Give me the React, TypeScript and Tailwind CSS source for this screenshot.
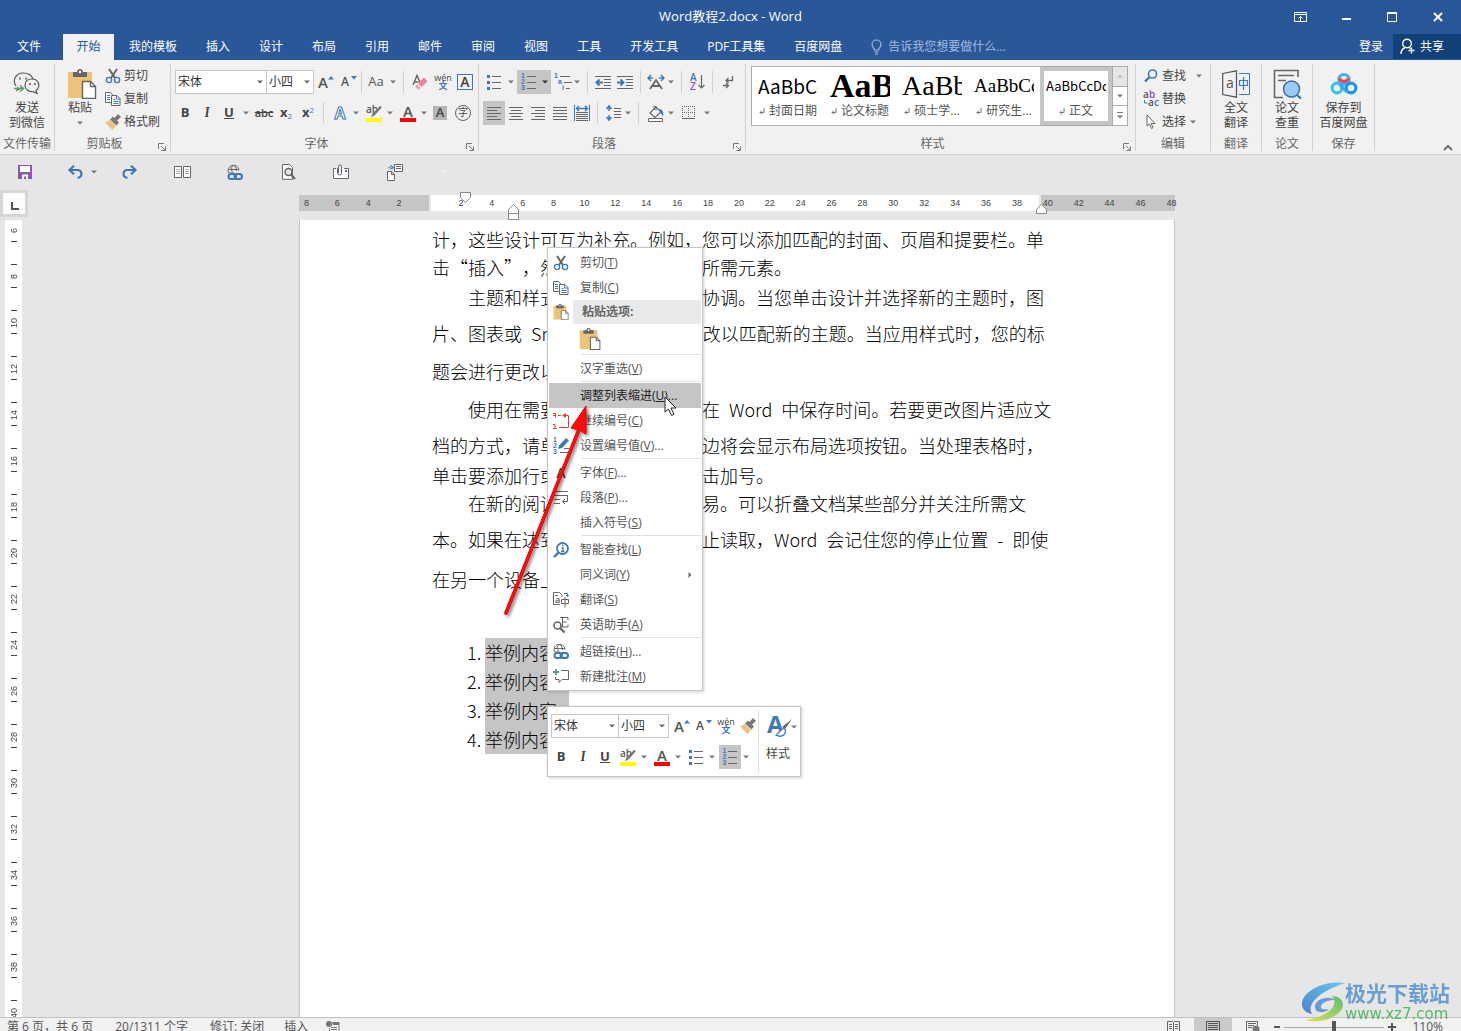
import { ReactNode } from 'react';

const BLUE = '#3f78b5';
const GREY = '#666666';
const TAN = '#edc27a';

type Kids = { children?: ReactNode };

/* ---------- small building blocks ---------- */

const Caret = ({ className = 'text-[#777]' }: { className?: string }) => (
  <svg width="6" height="4" viewBox="0 0 6 4" className={`shrink-0 ${className}`} aria-hidden="true">
    <path d="M0 .5h6L3 3.5z" fill="currentColor" />
  </svg>
);

const Tool = ({ label, className = 'w-[22px]', children }: Kids & { label: string; className?: string }) => (
  <button type="button" aria-label={label} className={`flex h-6 shrink-0 items-center justify-center ${className}`}>
    {children}
  </button>
);

const Drop = ({ className = 'w-3' }: { className?: string }) => (
  <Tool label="更多" className={className}>
    <Caret />
  </Tool>
);

const Sep = ({ className = 'mx-1' }: { className?: string }) => (
  <span className={`h-[22px] w-px shrink-0 bg-[#d0d0d0] ${className}`} />
);

const Combo = ({ label, value, className }: { label: string; value: string; className: string }) => (
  <label className={`relative flex h-6 shrink-0 items-center ${className}`}>
    <select
      aria-label={label}
      defaultValue={value}
      className="h-full w-full appearance-none border border-[#c6c6c6] bg-white pl-0.5 text-xs text-[#333] outline-none"
    >
      <option>{value}</option>
    </select>
    <Caret className="pointer-events-none absolute right-1 text-[#666]" />
  </label>
);

/* ---------- icons ---------- */

const Svg = ({ w, h, children }: Kids & { w: number; h: number }) => (
  <svg width={w} height={h} viewBox={`0 0 ${w} ${h}`} fill="none" className="shrink-0 overflow-visible" aria-hidden="true">
    {children}
  </svg>
);

const ScissorsIcon = () => (
  <Svg w={16} h={16}>
    <path d="M4 1l6 9M12 1L6 10" stroke="#666" strokeWidth="2" />
    <circle cx="4" cy="12" r="2.6" stroke={BLUE} strokeWidth="1.4" />
    <circle cx="12" cy="12" r="2.6" stroke={BLUE} strokeWidth="1.4" />
  </Svg>
);

const CopyIcon = () => (
  <Svg w={16} h={16}>
    <path d="M.5 1.500h5l2 2v8h-7z" fill="#fff" stroke={GREY} />
    <path d="M2 4.500h3M2 6.500h3M2 8.500h3" stroke={BLUE} />
    <path d="M6.500 4.500h5.500l3 3v7h-8.500z" fill="#fff" stroke={GREY} />
    <path d="M11.500 4.500v3.500h3.500M8.500 8.500h2M8.500 10.500h5M8.500 12.500h5" stroke={BLUE} />
  </Svg>
);

const BrushIcon = () => (
  <Svg w={16} h={16}>
    <path d="M0 8.500l5-2.500 6 6-3.500 4z" fill={TAN} />
    <path d="M5 5.500l6.500 6 2.500-3-2-2 4-3.500L13 0 9.500 4 8 2.500z" fill="#777" />
  </Svg>
);

const PasteIcon = ({ size }: { size: number }) => (
  <svg width={size} height={size} viewBox="0 0 30 30" fill="none" className="shrink-0" aria-hidden="true">
    <path d="M1 3h24v26H1z" fill={TAN} />
    <path d="M6 3h4c0-4 6-4 6 0h4v5H6z" fill={GREY} />
    <circle cx="13" cy="3" r="1.200" fill="#fff" />
    <path d="M15.500 12.500h8l5 5v12h-13z" fill="#fff" stroke={GREY} strokeWidth="1.400" />
    <path d="M23.500 12.500v5h5" stroke={GREY} strokeWidth="1.400" />
  </svg>
);

const WeChatIcon = () => (
  <Svg w={28} h={26}>
    <path d="M3 15C-1 9 3 2 10 2c6 0 9 3 10 6M8 17l-4 2 1-3" stroke="#555" strokeWidth="1.200" />
    <path d="M19 8c-5 0-7 3-7 6.500 0 4 4 6.500 8 6.200l4 1.800-1-3c5-4 3-11.500-4-11.500z" stroke="#555" strokeWidth="1.200" />
    <path d="M7 6.500v2M13 6.500v2M17 12v2M22 12v2" stroke="#555" strokeWidth="1.500" />
    <path d="M1 17.500h9M7 14.500l3.500 3L7 20.500" stroke="#4fa264" strokeWidth="1.500" />
  </Svg>
);

const GrowIcon = ({ shrink = false }: { shrink?: boolean }) => (
  <span className="relative flex h-4 w-4 items-end justify-start leading-none text-[#555]">
    <span className={shrink ? 'text-xs font-semibold' : 'text-[15px] font-semibold'}>A</span>
    <svg width="6" height="4" viewBox="0 0 6 4" className="absolute top-0.5 right-0" aria-hidden="true">
      <path d={shrink ? 'M0 0h6L3 3.500z' : 'M0 3.500h6L3 0z'} fill={BLUE} />
    </svg>
  </span>
);

const EraserIcon = () => (
  <Svg w={16} h={16}>
    <path d="M1 11L5 1.500 8 8M2.500 8h4" stroke={GREY} strokeWidth="1.500" />
    <path d="M12 3.500l3.500 4-6 5.500-3.500-4z" fill="#e8849a" />
    <path d="M5 10l3.500 4-2 2L3 12.500z" fill="#ef9fb0" />
  </Svg>
);

const PinyinIcon = () => (
  <span className="flex flex-col items-center text-[9px] leading-2 text-[#444]">
    <span>wén</span>
    <span className="font-bold text-[#3f78b5]">文</span>
  </span>
);

const ColorBar = ({ color, children }: Kids & { color: string }) => (
  <span className="flex w-4 flex-col items-center">
    {children}
    <span className="h-1 w-4" style={{ backgroundColor: color }} />
  </span>
);

const HighlightIcon = () => (
  <ColorBar color="#ffff00">
    <Svg w={16} h={13}>
      <text x="0" y="8" fontSize="10" fontWeight="600" fill="#555">ab</text>
      <path d="M16 2L9 10l-4 2.500 1.500-4L14 1z" fill="#777" />
    </Svg>
  </ColorBar>
);

const FontColorIcon = () => (
  <ColorBar color="#ff0000">
    <span className="text-[15px] leading-[13px] font-semibold text-[#555]">A</span>
  </ColorBar>
);

const BulletsIcon = () => (
  <Svg w={14} h={16}>
    <path d="M0 1h3v3H0zM0 7h3v3H0zM0 13h3v3H0z" fill={BLUE} />
    <path d="M5 2.500h9M5 8.500h9M5 14.500h9" stroke={GREY} />
  </Svg>
);

const Digits = () => (
  <span className="flex flex-col text-[7px] leading-[6px] font-bold text-[#3f78b5] [font-family:'Liberation_Sans',sans-serif]">
    <span>1</span>
    <span>2</span>
    <span>3</span>
  </span>
);

const NumberingIcon = () => (
  <span className="flex items-center gap-0.5">
    <Digits />
    <Svg w={9} h={18}>
      <path d="M0 3.500h9M0 9.500h9M0 15.500h9" stroke={GREY} />
    </Svg>
  </span>
);

const MultiLevelIcon = () => (
  <span className="flex h-[18px] w-[18px] flex-col text-[7px] leading-[6px] font-bold text-[#3f78b5] [font-family:'Liberation_Sans',sans-serif]">
    <span className="flex items-center gap-0.5">1<i className="h-px w-2.5 bg-[#666]" /></span>
    <span className="flex items-center gap-0.5 pl-1">a<i className="h-px w-2 bg-[#666]" /></span>
    <span className="flex items-center gap-0.5 pl-2">i<i className="h-px w-1 bg-[#666]" /></span>
  </span>
);

const IndentIcon = ({ out = false }: { out?: boolean }) => (
  <Svg w={16} h={14}>
    <path d="M0 1.500h16M9 4.500h7M9 7.500h7M9 10.500h7M0 13.500h16" stroke={GREY} />
    <path
      d={out ? 'M8 7.500H2M4.500 4.500l-3 3 3 3' : 'M0 7.500h6M3.500 4.500l3 3-3 3'}
      stroke={BLUE}
      strokeWidth="2"
    />
  </Svg>
);

const AlignIcon = ({ d }: { d: string }) => (
  <Svg w={14} h={13}>
    <path d={d} stroke={GREY} />
  </Svg>
);

const DistributeIcon = () => (
  <Svg w={16} h={16}>
    <path d="M.5 0v16M15.500 0v16" stroke={BLUE} />
    <path d="M2 3.500h12M5 1L2.500 3.500 5 6M11 1l2.500 2.500L11 6" stroke={BLUE} strokeWidth="1.500" />
    <path d="M2 7.500h12M2 9.500h12M2 11.500h12M2 13.500h12M2 15.500h12" stroke={GREY} />
  </Svg>
);

const ScaleIcon = () => (
  <Svg w={18} h={16}>
    <path d="M1 4h5M4 1L1 4l3 3M17 4h-5M14 1l3 3-3 3" stroke={BLUE} strokeWidth="1.400" />
    <path d="M3 15L9 6l6 9M5.500 12h7" stroke={GREY} strokeWidth="1.800" />
  </Svg>
);

const SortIcon = () => (
  <Svg w={15} h={18}>
    <text x="0" y="8" fontSize="10" fontWeight="600" fill={BLUE}>A</text>
    <text x="0" y="17" fontSize="10" fontWeight="600" fill="#8b4fb0">Z</text>
    <path d="M11.500 2v13M8.500 12l3 3 3-3" stroke={GREY} strokeWidth="1.200" />
  </Svg>
);

const MarksIcon = () => (
  <Svg w={12} h={14}>
    <path d="M10.500 1v4.500H4M6.500 3L4 5.500 6.500 8M1 10.500h5M4 8l2.500 2.500L4 13" stroke={GREY} strokeWidth="1.300" />
  </Svg>
);

const LineSpaceIcon = () => (
  <Svg w={15} h={16}>
    <path d="M3 1v5M.5 4L3 1l2.500 3M3 10v5M.5 12L3 15l2.500-3" stroke={BLUE} strokeWidth="1.500" />
    <path d="M8 3.500h7M8 6.500h7M8 9.500h7M8 12.500h7" stroke={GREY} />
  </Svg>
);

const BucketIcon = () => (
  <Svg w={17} h={17}>
    <path d="M3 8l6-6 5 5-6 5.500z" fill="#fff" stroke={GREY} strokeWidth="1.200" />
    <path d="M7 5V1.500h2V6" stroke={GREY} />
    <path d="M12 4c4 0 5 4 4 8-1-3-2-4-3-4z" fill={BLUE} />
    <path d="M1.500 13.500h14v3h-14z" fill="#fff" stroke={GREY} />
  </Svg>
);

const BorderIcon = () => (
  <Svg w={14} h={14}>
    <path d="M.5 0v13M6.500 0v13M12.500 0v13M0 .5h13M0 6.500h13" stroke={GREY} strokeDasharray="1 1" />
    <path d="M0 12.500h13" stroke={GREY} />
  </Svg>
);

const FindIcon = () => (
  <Svg w={14} h={14}>
    <circle cx="8.500" cy="5" r="4" stroke={BLUE} strokeWidth="1.600" />
    <path d="M5.500 8L1 12.500" stroke={BLUE} strokeWidth="2.400" />
  </Svg>
);

const ReplaceIcon = () => (
  <Svg w={17} h={16}>
    <text x="0" y="7" fontSize="10" fontWeight="600" fill="#555">a</text>
    <text x="6" y="7" fontSize="10" fontWeight="600" fill="#8b4fb0">b</text>
    <text x="5" y="15" fontSize="10" fontWeight="600" fill="#555">a</text>
    <text x="11" y="15" fontSize="10" fontWeight="600" fill={BLUE}>c</text>
    <path d="M1.500 9v3h3" stroke={BLUE} />
  </Svg>
);

const PointerIcon = () => (
  <Svg w={10} h={15}>
    <path d="M1 1v11l2.500-2 2 4.500 1.500-.8L5.200 9.500H9z" fill="#fff" stroke={GREY} />
  </Svg>
);

const TranslateBigIcon = () => (
  <Svg w={28} h={28}>
    <path d="M.7 3.500L14.500.8v26.400L.7 24.500z" stroke="#555" strokeWidth="1.200" />
    <text x="4" y="18" fontSize="14" fill="#555">a</text>
    <path d="M17 3.500h10.500M17 24.500h10.500v-21" stroke={BLUE} />
    <path d="M17.500 10.500h8v5h-8zM21.500 7v13" stroke={BLUE} strokeWidth="1.200" />
  </Svg>
);

const PaperCheckIcon = () => (
  <Svg w={30} h={30}>
    <path d="M11 28.500H2.500v-27H26V8M6 6.500h16M6 11.500h8" stroke="#666" strokeWidth="1.600" />
    <circle cx="19.500" cy="20" r="8" fill="#9acbf5" stroke="#3a6ea5" strokeWidth="1.500" />
    <path d="M25 26l4 3.500" stroke="#3a6ea5" strokeWidth="2.200" />
  </Svg>
);

const CloudIcon = () => (
  <Svg w={28} h={24}>
    <circle cx="14" cy="7.500" r="5" stroke="#3fb4ee" strokeWidth="3.200" />
    <circle cx="7" cy="16" r="4.800" stroke="#38c3ee" strokeWidth="3.200" />
    <circle cx="21" cy="16" r="4.800" stroke="#1b93f2" strokeWidth="3.200" />
    <path d="M10 12.500c2 2.500 4 6 8 7.500" stroke="#30a9f0" strokeWidth="3.200" />
    <path d="M9.200 6a5 5 0 009.600 0" stroke="#ef476b" strokeWidth="3.200" />
  </Svg>
);

const LauncherIcon = () => (
  <Svg w={8} h={8}>
    <path d="M.5 6V.5H6M3 3l4 4M7.500 3.500v4h-4" stroke="#777" />
  </Svg>
);

const LinkIcon = () => (
  <Svg w={16} h={17}>
    <path d="M1.500 9A5.500 5.500 0 1112 6.500M1 5.500h11M6.500 1c-3 3-3 5 0 8M6.500 1c3 3 3 4 3 6M2 9h3" stroke={GREY} />
    <rect x="1.500" y="10" width="7.500" height="5" rx="2.500" stroke={BLUE} strokeWidth="2" />
    <rect x="7.500" y="10" width="7.500" height="5" rx="2.500" stroke={BLUE} strokeWidth="2" />
  </Svg>
);

/* ---------- title bar and tabs ---------- */

const tabs = ['我的模板', '插入', '设计', '布局', '引用', '邮件', '审阅', '视图', '工具', '开发工具', 'PDF工具集', '百度网盘'];

const TitleBar = () => (
  <header className="bg-[#2a579a] text-xs text-white">
    <div className="flex h-[34px] items-center">
      <div className="flex-1" />
      <h1 className="text-[13px]">Word教程2.docx - Word</h1>
      <div className="flex flex-1 justify-end">
        <Tool label="功能区显示选项" className="w-[46px]">
          <Svg w={13} h={10}>
            <path d="M.5.5h12v9H.5zM0 2.500h13M6.500 9V4.500M4.500 6.500l2-2 2 2" stroke="#fff" />
          </Svg>
        </Tool>
        <Tool label="最小化" className="w-[46px]">
          <Svg w={10} h={10}><path d="M1 7h9" stroke="#fff" strokeWidth="2" /></Svg>
        </Tool>
        <Tool label="最大化" className="w-[46px]">
          <Svg w={10} h={10}><path d="M.5.5h9v9h-9zM0 1.500h10" stroke="#fff" /></Svg>
        </Tool>
        <Tool label="关闭" className="w-[46px]">
          <Svg w={10} h={10}><path d="M1 1l8 8M9 1L1 9" stroke="#fff" strokeWidth="2" /></Svg>
        </Tool>
      </div>
    </div>
    <nav className="flex h-[26px] items-stretch gap-px">
      <button type="button" className="w-[62px] pr-1">文件</button>
      <button type="button" className="w-[51px] bg-[#f1f1f1] text-[#2a579a]">开始</button>
      {tabs.map((t) => (
        <button key={t} type="button" className="px-3.5 whitespace-nowrap">{t}</button>
      ))}
      <label className="flex items-center gap-1.5 pl-3.5 text-[#a3bbdc]">
        <Svg w={11} h={15}>
          <path d="M3.500 10c0-2-2.500-2.500-2.500-5.500a4.500 4.500 0 019 0c0 3-2.500 3.500-2.500 5.500zM3.500 12h4M4 14h3" stroke="#a3bbdc" strokeWidth="1.200" />
        </Svg>
        <input
          aria-label="告诉我您想要做什么"
          placeholder="告诉我您想要做什么..."
          className="w-36 bg-transparent outline-none placeholder:text-[#a3bbdc]"
        />
      </label>
      <button type="button" className="ml-auto px-[9px]">登录</button>
      <button type="button" className="mb-px flex w-[68px] items-center gap-1 bg-[#124078] pl-[7px]">
        <Svg w={16} h={17}>
          <circle cx="7" cy="5.500" r="4.300" stroke="#fff" strokeWidth="1.400" />
          <path d="M1 16c0-3 2-5.500 4-6.500M9 9.500l1.500 1M11.500 9.500v6M8.500 12.500h6" stroke="#fff" strokeWidth="1.400" />
        </Svg>
        共享
      </button>
    </nav>
  </header>
);

/* ---------- ribbon ---------- */

type GroupProps = Kids & { name: string; className: string; inner?: string; launcher?: boolean };

const Group = ({ name, className, inner = '', launcher = false, children }: GroupProps) => (
  <section className={`flex shrink-0 flex-col border-r border-[#d0d0d0] ${className}`}>
    <div className={`h-[73px] ${inner}`}>{children}</div>
    <div className={`relative flex h-[14px] items-center justify-center whitespace-nowrap text-[#666] ${launcher ? 'pr-4' : ''}`}>
      {name}
      {launcher && (
        <button type="button" aria-label={`${name}设置`} className="absolute right-1 bottom-0">
          <LauncherIcon />
        </button>
      )}
    </div>
  </section>
);

const BigButton = ({ icon, lines }: { icon: ReactNode; lines: string[] }) => (
  <button type="button" className="flex w-full flex-col items-center pt-1 leading-[15px] text-[#444]">
    <span className="flex h-8 items-center justify-center">{icon}</span>
    {lines.map((l) => (
      <span key={l} className="whitespace-nowrap">{l}</span>
    ))}
  </button>
);

const SmallButton = ({ icon, text, drop }: { icon: ReactNode; text: string; drop?: string }) => (
  <button type="button" className="flex h-[23px] items-center text-[#444]">
    <span className="flex w-4 justify-center">{icon}</span>
    <span className="ml-[3px]">{text}</span>
    {drop && <span className={drop}><Caret /></span>}
  </button>
);

const FontGroup = () => (
  <Group name="字体" className="w-[308px]" inner="pl-1" launcher>
    <div className="flex items-center pt-1.5">
      <Combo label="字体" value="宋体" className="w-[92px]" />
      <Combo label="字号" value="小四" className="-ml-px w-[48px]" />
      <Tool label="增大字号" className="w-6"><GrowIcon /></Tool>
      <Tool label="减小字号"><GrowIcon shrink /></Tool>
      <Sep className="ml-px" />
      <Tool label="更改大小写" className="w-10 gap-1.5 text-[13px] text-[#555]">Aa<Caret /></Tool>
      <Sep className="ml-px" />
      <Tool label="清除格式" className="ml-1 w-6"><EraserIcon /></Tool>
      <Tool label="拼音指南"><PinyinIcon /></Tool>
      <Tool label="字符边框">
        <span className="flex size-4 items-center justify-center border border-[#3f78b5] text-sm leading-none font-semibold text-[#444]">A</span>
      </Tool>
    </div>
    <div className="mt-[7px] flex items-center text-[13px] text-[#444]">
      <Tool label="加粗" className="w-5"><b>B</b></Tool>
      <Tool label="倾斜" className="w-6"><b className="font-serif italic">I</b></Tool>
      <Tool label="下划线" className="w-5"><u className="font-bold">U</u></Tool>
      <Drop className="w-[14px]" />
      <Tool label="删除线"><s className="text-[11px] font-semibold">abc</s></Tool>
      <Tool label="下标"><span><b>x</b><sub className="text-[8px] text-[#3f78b5]">2</sub></span></Tool>
      <Tool label="上标"><span><b>x</b><sup className="text-[8px] text-[#3f78b5]">2</sup></span></Tool>
      <Sep />
      <Tool label="文本效果" className="w-6">
        <span className="text-base leading-none font-bold text-white [-webkit-text-stroke:1px_#3f78b5]">A</span>
      </Tool>
      <Drop className="w-2" />
      <Tool label="突出显示" className="ml-0.5 w-6"><HighlightIcon /></Tool>
      <Drop className="w-2" />
      <Tool label="字体颜色" className="ml-0.5 w-6"><FontColorIcon /></Tool>
      <Drop className="w-2" />
      <Tool label="字符底纹" className="w-6">
        <span className="flex size-[14px] items-center justify-center bg-[#b5b5b5] font-semibold">A</span>
      </Tool>
      <Tool label="带圈字符">
        <span className="flex size-4 items-center justify-center rounded-full border border-[#666] text-[10px]">字</span>
      </Tool>
    </div>
  </Group>
);

const ParagraphGroup = () => (
  <Group name="段落" className="w-[267px]" inner="pl-1" launcher>
    <div className="flex items-center pt-1.5">
      <Tool label="项目符号"><BulletsIcon /></Tool>
      <Drop />
      <button type="button" aria-label="编号" aria-pressed="true" className="flex h-6 w-[34px] items-center gap-1.5 bg-[#c5c5c5] pl-1">
        <NumberingIcon />
        <Caret className="text-[#333]" />
      </button>
      <Tool label="多级列表" className="ml-0.5 w-5"><MultiLevelIcon /></Tool>
      <Drop className="w-2" />
      <Sep className="mr-1 ml-1.5" />
      <Tool label="减少缩进"><IndentIcon out /></Tool>
      <Tool label="增加缩进"><IndentIcon /></Tool>
      <Sep />
      <Tool label="中文版式"><ScaleIcon /></Tool>
      <Drop className="w-2" />
      <Sep className="mr-1 ml-1.5" />
      <Tool label="排序"><SortIcon /></Tool>
      <Sep />
      <Tool label="显示编辑标记"><MarksIcon /></Tool>
    </div>
    <div className="mt-[7px] flex items-center">
      <Tool label="左对齐" className="w-[22px] bg-[#c5c5c5]"><AlignIcon d="M0 .5h14M0 3.500h10M0 6.500h14M0 9.500h10M0 12.500h14" /></Tool>
      <Tool label="居中"><AlignIcon d="M0 .5h14M2 3.500h10M0 6.500h14M2 9.500h10M0 12.500h14" /></Tool>
      <Tool label="右对齐"><AlignIcon d="M0 .5h14M4 3.500h10M0 6.500h14M4 9.500h10M0 12.500h14" /></Tool>
      <Tool label="两端对齐"><AlignIcon d="M0 .5h14M0 3.500h14M0 6.500h14M0 9.500h14M0 12.500h14" /></Tool>
      <Tool label="分散对齐"><DistributeIcon /></Tool>
      <Sep />
      <Tool label="行距"><LineSpaceIcon /></Tool>
      <Drop className="w-2" />
      <Sep className="mr-1 ml-1.5" />
      <Tool label="底纹" className="w-6"><BucketIcon /></Tool>
      <Drop className="w-2" />
      <Tool label="边框" className="w-7"><BorderIcon /></Tool>
      <Drop className="w-2" />
    </div>
  </Group>
);

const styles = [
  { name: '封面日期', cls: "text-[19px] [font-family:'Noto_Sans_CJK_SC',sans-serif]", sample: 'AaBbCc' },
  { name: '论文标题', cls: "text-[34px] font-bold [font-family:'Liberation_Serif',serif]", sample: 'AaBb' },
  { name: '硕士学...', cls: "text-[28px] [font-family:'Liberation_Serif',serif]", sample: 'AaBb' },
  { name: '研究生...', cls: "text-[19px] [font-family:'Liberation_Serif',serif]", sample: 'AaBbCc' },
  { name: '正文', cls: "text-[13px] [font-family:'Noto_Sans_CJK_SC',sans-serif]", sample: 'AaBbCcDd' },
];

const StylesGroup = () => (
  <Group name="样式" className="w-[390px]" inner="pl-[5px] pr-[7px]" launcher>
    <div className="flex pt-0.5">
      <div className="flex h-[60px] flex-1 border border-[#ababab] bg-white">
        {styles.map((s) => (
          <button
            key={s.name}
            type="button"
            className={`flex w-[72px] shrink-0 flex-col items-center border-4 px-0.5 ${s.name === '正文' ? 'border-[#c5c5c5]' : 'border-white'}`}
          >
            <span className={`flex h-[30px] w-[60px] items-center overflow-hidden leading-[30px] text-black ${s.cls}`}>
              {s.sample}
            </span>
            <span className="flex h-5 items-center gap-1 whitespace-nowrap text-[#555]">
              <Svg w={6} h={7}><path d="M5 0v4.500H1M3 2.500l-2 2 2 2" stroke="#777" /></Svg>
              {s.name}
            </span>
          </button>
        ))}
      </div>
      <div className="flex w-[15px] flex-col divide-y divide-[#ababab] border border-l-0 border-[#ababab] bg-white">
        <button type="button" aria-label="上一行" className="flex flex-1 items-center justify-center bg-[#e6e6e6]">
          <Caret className="rotate-180 text-[#bbb]" />
        </button>
        <button type="button" aria-label="下一行" className="flex flex-1 items-center justify-center"><Caret /></button>
        <button type="button" aria-label="其他" className="flex flex-1 flex-col items-center justify-center gap-0.5">
          <span className="h-px w-1.5 bg-[#777]" />
          <Caret />
        </button>
      </div>
    </div>
  </Group>
);

const Ribbon = () => (
  <div className="flex h-[95px] border-b border-[#d2d2d2] bg-[#f1f1f1] pt-1 pb-[3px] text-xs">
    <Group name="文件传输" className="w-[55px]">
      <BigButton icon={<WeChatIcon />} lines={['发送', '到微信']} />
    </Group>
    <Group name="剪贴板" className="w-[116px]" launcher>
      <div className="flex">
        <button type="button" className="flex w-[50px] flex-col items-center pt-1 leading-[15px] text-[#444]">
          <span className="flex h-8 items-center pl-1"><PasteIcon size={30} /></span>
          粘贴
          <span className="flex h-[15px] items-center"><Caret /></span>
        </button>
        <div className="flex flex-col">
          <SmallButton icon={<ScissorsIcon />} text="剪切" />
          <SmallButton icon={<CopyIcon />} text="复制" />
          <SmallButton icon={<BrushIcon />} text="格式刷" />
        </div>
      </div>
    </Group>
    <FontGroup />
    <ParagraphGroup />
    <StylesGroup />
    <Group name="编辑" className="w-[75px]" inner="pl-[7px]">
      <SmallButton icon={<FindIcon />} text="查找" drop="ml-2.5" />
      <SmallButton icon={<ReplaceIcon />} text="替换" />
      <SmallButton icon={<PointerIcon />} text="选择" drop="ml-1" />
    </Group>
    <Group name="翻译" className="w-[51px]">
      <BigButton icon={<TranslateBigIcon />} lines={['全文', '翻译']} />
    </Group>
    <Group name="论文" className="w-[51px]">
      <BigButton icon={<PaperCheckIcon />} lines={['论文', '查重']} />
    </Group>
    <Group name="保存" className="w-[62px]">
      <BigButton icon={<CloudIcon />} lines={['保存到', '百度网盘']} />
    </Group>
    <button type="button" aria-label="折叠功能区" className="mr-2 ml-auto self-end">
      <Svg w={10} h={6}><path d="M1 5l4-4 4 4" stroke="#666" strokeWidth="1.800" /></Svg>
    </button>
  </div>
);

const QuickAccess = () => (
  <div className="flex h-[34px] shrink-0 items-center pl-3.5">
    <Tool label="保存">
      <Svg w={14} h={14}>
        <path d="M0 0h14v14H0z" fill="#8b57b0" />
        <path d="M2 1h10v6H2zM4 9.500h6V14H8v-2.500H6V14H4z" fill="#fff" />
      </Svg>
    </Tool>
    <Tool label="撤消" className="ml-7 w-[22px]">
      <Svg w={15} h={14}><path d="M1 5h8.500c5 0 5.500 7 0 8M6 .8L1.500 5 6 9.200" stroke={BLUE} strokeWidth="2.200" /></Svg>
    </Tool>
    <Drop className="w-4" />
    <Tool label="恢复" className="ml-4 w-[22px]">
      <Svg w={15} h={14}><path d="M14 5H5.500c-5 0-5.500 7 0 8M9 .8L13.500 5 9 9.200" stroke={BLUE} strokeWidth="2.200" /></Svg>
    </Tool>
    <Tool label="双页" className="ml-[31px] w-[22px]">
      <Svg w={17} h={12}>
        <path d="M.5.5h7v11h-7zM9.500.5h7v11h-7z" fill="#fff" stroke={GREY} />
        <path d="M2 3.500h4M2 5.500h4M2 7.500h4M11 3.500h4M11 5.500h4M11 7.500h4" stroke="#aaa" />
      </Svg>
    </Tool>
    <Tool label="超链接" className="ml-[31px] w-[22px]"><LinkIcon /></Tool>
    <Tool label="打印预览" className="ml-[31px] w-[22px]">
      <Svg w={15} h={16}>
        <path d="M1.500.5h7l3 3v11.800h-10z" fill="#fff" stroke={GREY} />
        <circle cx="7.500" cy="8" r="3.500" fill="#e6e6e6" stroke={GREY} strokeWidth="1.500" />
        <path d="M10 10.500l4 4.500" stroke={GREY} strokeWidth="2.200" />
      </Svg>
    </Tool>
    <Tool label="附件" className="ml-[31px] w-[22px]">
      <Svg w={17} h={16}>
        <path d="M3 4.500H.5v10h15v-10H11" fill="#fff" stroke={GREY} />
        <path d="M4.500 4v5a2 2 0 004 0V2.500a1.500 1.500 0 00-3 0V9" stroke={GREY} />
        <path d="M12 6h2v2h-2z" fill={BLUE} />
      </Svg>
    </Tool>
    <Tool label="切换窗口" className="ml-[31px] w-[22px]">
      <Svg w={17} h={17}>
        <path d="M8.500.5h8v7h-8zM10 2.500h5M10 4.500h5" fill="#fff" stroke={GREY} />
        <path d="M1.500 7.500h4l3 3v6h-7zM5.500 7.500v3h3" fill="#fff" stroke={GREY} />
        <path d="M2 4.500c1-2 3-2 5-1M5 1l2.500 3L4 5" stroke={BLUE} />
      </Svg>
    </Tool>
    <Tool label="自定义快速访问工具栏" className="ml-7 w-[22px]"><Caret className="text-[#f5f5f5]" /></Tool>
  </div>
);

/* ---------- rulers ---------- */

const hMarks = [8, 6, 4, 2, 0, ...Array.from({ length: 24 }, (_, i) => (i + 1) * 2)];
const vMarks = Array.from({ length: 18 }, (_, i) => i * 2 + 6);

const HRuler = () => (
  <div className="relative mx-auto flex h-4 w-[876px] shrink-0 gap-0.5 text-[9px] text-[#444] [font-family:'Liberation_Sans',sans-serif]">
    <span className="w-[130px] bg-[#c5c5c5]" />
    <span className="w-[608px] bg-white" />
    <span className="flex-1 bg-[#c5c5c5]" />
    <div className="absolute -left-2 flex h-[18px] w-[896px] items-center">
      {hMarks.map((n, i) => (
        <span key={i} className="flex-1 text-center">{n || ''}</span>
      ))}
    </div>
    <svg width="12" height="11" viewBox="0 0 12 11" className="absolute -top-[3px] left-[161px]" aria-hidden="true">
      <path d="M.5.5h10v5l-5 5-5-5z" fill="#fff" stroke="#888" />
    </svg>
    <svg width="12" height="16" viewBox="0 0 12 16" className="absolute top-[9px] left-[209px]" aria-hidden="true">
      <path d="M.5 15.500v-10l5-5 5 5v10zM.5 9.500h10" fill="#fff" stroke="#888" />
    </svg>
    <svg width="12" height="11" viewBox="0 0 12 11" className="absolute top-[9px] left-[737px]" aria-hidden="true">
      <path d="M.5 9.500v-4l5-5 5 5v4z" fill="#fff" stroke="#888" />
    </svg>
  </div>
);

const VRuler = () => (
  <div className="flex w-[27px] shrink-0 flex-col">
    <div className="h-[27px] w-7 border-[3px] border-[#d6d6d6] bg-[#fcfcfc]">
      <Svg w={22} h={21}><path d="M9 9v7h7" stroke="#555" strokeWidth="2" /></Svg>
    </div>
    <div className="mt-[3px] ml-[5px] flex w-[17px] flex-1 flex-col items-center overflow-hidden bg-white text-[9px] text-[#444] [font-family:'Liberation_Sans',sans-serif]">
      {vMarks.map((n) => (
        <div key={n} className="flex h-[46px] shrink-0 flex-col items-center">
          <span className="flex h-[21px] w-4 rotate-180 items-center justify-center leading-none [writing-mode:vertical-rl]">{n}</span>
          <span className="h-px w-1.5 bg-[#444]" />
          <span className="mt-[22px] h-px w-1.5 bg-[#444]" />
        </div>
      ))}
    </div>
  </div>
);

/* ---------- document ---------- */

const lines = [
  { cls: 'leading-[28px]', text: '计，这些设计可互为补充。例如，您可以添加匹配的封面、页眉和提要栏。单' },
  { cls: 'leading-[28px]', text: '击“插入”，然后从不同库中选择所需元素。' },
  { cls: 'pl-9 leading-[32px]', text: '主题和样式也有助于文档保持协调。当您单击设计并选择新的主题时，图' },
  { cls: 'leading-[40px]', text: '片、图表或\u2002SmartArt\u2002图形将会更改以匹配新的主题。当应用样式时，您的标' },
  { cls: 'leading-[36px]', text: '题会进行更改以匹配新的主题。' },
  { cls: 'pl-9 leading-[40px]', text: '使用在需要位置出现的新按钮在\u2002Word\u2002中保存时间。若要更改图片适应文' },
  { cls: 'leading-[32px]', text: '档的方式，请单击该图片，图片旁边将会显示布局选项按钮。当处理表格时，' },
  { cls: 'leading-[28px]', text: '单击要添加行或列的位置，然后单击加号。' },
  { cls: 'pl-9 leading-[28px]', text: '在新的阅读视图中阅读更加容易。可以折叠文档某些部分并关注所需文' },
  { cls: 'leading-[44px]', text: '本。如果在达到结尾处之前需要停止读取，Word\u2002会记住您的停止位置\u2002-\u2002即使' },
  { cls: 'leading-[36px]', text: '在另一个设备上。' },
];

const menu: { text?: string; hot?: string; more?: string; icon?: ReactNode; active?: boolean; sub?: boolean }[] = [
  { text: '汉字重选', hot: 'V' },
  {},
  { text: '调整列表缩进', hot: 'U', more: '...', active: true },
  {
    text: '继续编号',
    hot: 'C',
    icon: (
      <Svg w={16} h={16}>
        <path d="M0 .5h2.500v4M0 2.500h2M5 2.500h3M0 11.500h2v4M0 15.500h4M6 14.500h9.500v-12H11" stroke="#d0492c" />
        <path d="M9 2.500L13 0v5z" fill="#d0492c" />
      </Svg>
    ),
  },
  {
    text: '设置编号值',
    hot: 'V',
    more: '...',
    icon: (
      <span className="flex items-center gap-px">
        <Digits />
        <Svg w={11} h={18}>
          <path d="M0 12l1-3.500L8 1l3 2.500-7 7.500z" fill={BLUE} />
          <path d="M6 11.500h5M2 15.500h9" stroke={GREY} />
        </Svg>
      </span>
    ),
  },
  {},
  { text: '字体', hot: 'F', more: '...', icon: <span className="text-sm font-semibold text-[#444]">A</span> },
  {
    text: '段落',
    hot: 'P',
    more: '...',
    icon: <Svg w={15} h={14}><path d="M0 .5h14M0 4.500h14M0 8.500h6M0 12.500h6M13.500 5v5.500H9M11 8l-2.500 2.500L11 13" stroke={GREY} /></Svg>,
  },
  { text: '插入符号', hot: 'S' },
  {},
  {
    text: '智能查找',
    hot: 'L',
    icon: (
      <Svg w={16} h={16}>
        <circle cx="9.500" cy="6.500" r="5.500" stroke={BLUE} strokeWidth="1.800" />
        <path d="M5.500 10.500L1 15" stroke={BLUE} strokeWidth="2.400" />
        <path d="M8.500 6h1.500v3.500M8 9.500h3.500M9 3.500h1.500" stroke={BLUE} strokeWidth="1.400" />
      </Svg>
    ),
  },
  { text: '同义词', hot: 'Y', sub: true },
  {
    text: '翻译',
    hot: 'S',
    icon: (
      <Svg w={16} h={16}>
        <path d="M7 12.500H.5V.5h6l2.500 2.500v1.500M2 3.500h3M8.500 7.500h7v4h-7zM12 5v10.500" stroke={GREY} />
        <text x="2" y="11" fontSize="9" fontWeight="600" fill="#555">a</text>
        <path d="M11 1.500h3.500V4M13 3l1.500 1.500L16 3" stroke={BLUE} />
      </Svg>
    ),
  },
  {
    text: '英语助手',
    hot: 'A',
    icon: (
      <Svg w={16} h={16}>
        <circle cx="4.500" cy="8.500" r="3.500" stroke={GREY} strokeWidth="1.600" />
        <path d="M7 11l4.500 4.500" stroke={GREY} strokeWidth="2.200" />
        <path d="M7 .5h8v2.500M9.500.5v9.500M9.500 5h4M7 10h8V7.500" stroke={GREY} />
      </Svg>
    ),
  },
  {},
  { text: '超链接', hot: 'H', more: '...', icon: <LinkIcon /> },
  {
    text: '新建批注',
    hot: 'M',
    icon: (
      <Svg w={16} h={16}>
        <path d="M8 1.500h7.500v9H9l-3 3v-3H2.500V8" stroke={GREY} />
        <path d="M3 0v6M0 3h6" stroke="#4f9d80" strokeWidth="1.800" />
      </Svg>
    ),
  },
];

const MenuItem = ({ text, hot, more = '', icon, active, sub }: (typeof menu)[number]) => (
  <button
    type="button"
    role="menuitem"
    className={`flex h-[25px] w-full items-center whitespace-nowrap ${active ? 'bg-[#c5c5c5] text-[#222]' : 'text-[#555]'}`}
  >
    <span className="flex w-6 shrink-0 justify-center">{icon}</span>
    <span className="ml-[7px]">{text}(<u>{hot}</u>){more}</span>
    {sub && <Caret className="mr-2 ml-auto -rotate-90 text-[#666]" />}
  </button>
);

const ContextMenu = () => (
  <div
    role="menu"
    className="absolute top-[27px] left-[247px] w-[156px] border border-[#c6c6c6] bg-white px-px pt-0.5 pb-px text-xs shadow-[1px_1px_3px_rgba(0,0,0,0.2)]"
  >
    <MenuItem text="剪切" hot="T" icon={<ScissorsIcon />} />
    <MenuItem text="复制" hot="C" icon={<CopyIcon />} />
    <div className="flex h-6 items-center">
      <span className="flex w-6 justify-center"><PasteIcon size={16} /></span>
      <span className="flex h-full flex-1 items-center bg-[#e9e9e9] pl-[9px] font-bold text-[#666]">粘贴选项:</span>
    </div>
    <button type="button" aria-label="保留源格式粘贴" className="flex h-[30px] items-center pl-[30px]">
      <PasteIcon size={22} />
    </button>
    <hr className="mb-px ml-8 border-[#e0e0e0]" />
    {menu.map((m, i) => (m.text ? <MenuItem key={i} {...m} /> : <hr key={i} className="mb-px ml-8 border-[#e0e0e0]" />))}
  </div>
);

const MiniToolbar = () => (
  <div className="absolute top-[486px] left-[247px] flex w-[254px] border border-[#c6c6c6] bg-white py-[3px] pl-[3px] text-xs text-[#444] shadow-[1px_1px_3px_rgba(0,0,0,0.2)]">
    <div className="flex w-[207px] flex-col gap-[7px] py-1">
      <div className="flex items-center">
        <Combo label="字体" value="宋体" className="w-[68px]" />
        <Combo label="字号" value="小四" className="-ml-px w-[51px]" />
        <Tool label="增大字号" className="ml-0.5 w-[22px]"><GrowIcon /></Tool>
        <Tool label="减小字号"><GrowIcon shrink /></Tool>
        <Tool label="拼音指南"><PinyinIcon /></Tool>
        <Tool label="格式刷"><BrushIcon /></Tool>
      </div>
      <div className="flex items-center text-[13px]">
        <Tool label="加粗" className="w-5"><b>B</b></Tool>
        <Tool label="倾斜" className="w-6"><b className="font-serif italic">I</b></Tool>
        <Tool label="下划线" className="w-5"><u className="font-bold">U</u></Tool>
        <Tool label="突出显示" className="ml-px w-6"><HighlightIcon /></Tool>
        <Drop className="w-2" />
        <Tool label="字体颜色" className="ml-0.5 w-6"><FontColorIcon /></Tool>
        <Drop className="w-2" />
        <Tool label="项目符号" className="ml-0.5 w-6"><BulletsIcon /></Tool>
        <Drop className="w-2" />
        <Tool label="编号" className="ml-[3px] w-[22px] bg-[#c5c5c5]"><NumberingIcon /></Tool>
        <Drop className="w-2.5" />
      </div>
    </div>
    <button type="button" className="flex flex-1 flex-col items-center border-l border-[#e0e0e0] pt-1 pr-1">
      <span className="flex items-center pl-2">
        <Svg w={24} h={26}>
          <text x="0" y="19" fontSize="24" fontWeight="700" fill={BLUE}>A</text>
          <path d="M25 5l-7 10-3-2z" fill={GREY} />
          <path d="M18 15c-4-2-5 4-9 6 5 3 11 0 9-6z" fill="#fff" stroke={BLUE} strokeWidth="1.300" />
        </Svg>
        <Caret />
      </span>
      <span className="mt-1.5">样式</span>
    </button>
  </div>
);

const Pointers = () => (
  <svg width="190" height="230" viewBox="0 0 190 230" className="pointer-events-none absolute top-[170px] left-[196px]" aria-hidden="true">
    <defs>
      <filter id="drop" x="-20%" y="-20%" width="150%" height="150%">
        <feDropShadow dx="2" dy="2" stdDeviation="1.500" floodOpacity="0.45" />
      </filter>
    </defs>
    <g filter="url(#drop)">
      <path d="M10 223L82 42" stroke="#c00000" strokeWidth="3.600" strokeLinecap="round" />
      <path d="M10 223L82 42" stroke="#ff0d0d" strokeWidth="2.600" strokeLinecap="round" />
      <path d="M90 16L75 38l8 2 7 4z" fill="#ff0d0d" stroke="#d00" />
    </g>
    <path d="M169 7v15l3.500-3 3 6.500 2.500-1.200-3-6.300h5z" fill="#fff" stroke="#222" />
  </svg>
);

const Page = () => (
  <article className="relative mx-auto w-[876px] flex-1 border-x border-[#c6c6c6] bg-white px-[132px] pt-[5px] text-lg text-black [font-family:'Noto_Sans_CJK_SC',sans-serif] [text-spacing-trim:space-all]">
    {lines.map((l) => (
      <p key={l.text} className={`font-light whitespace-nowrap ${l.cls}`}>{l.text}</p>
    ))}
    <ol className="mt-[41px] pl-[35px] leading-[29px] font-light">
      {[1, 2, 3, 4].map((n) => (
        <li key={n} className="flex">
          <span className="w-[18px]">{n}.</span>
          <span className="w-[84px] bg-[#c5c5c5]">举例内容</span>
        </li>
      ))}
    </ol>
    <div className="[font-family:'Open_Sans','Noto_Sans_CJK_SC',sans-serif]">
      <ContextMenu />
      <MiniToolbar />
      <Pointers />
    </div>
  </article>
);

/* ---------- status bar ---------- */

const StatusBar = () => (
  <footer className="h-[14px] shrink-0 border-t border-[#c0c0c0] bg-[#f1f1f1] text-xs text-[#555]">
    <div className="flex h-[18px] items-center whitespace-nowrap">
      <span className="pl-[7px]">第 6 页，共 6 页</span>
      <span className="ml-[22px]">20/1311 个字</span>
      <span className="ml-[22px]">修订: 关闭</span>
      <span className="ml-5">插入</span>
      <span className="ml-[18px]">
        <Svg w={14} h={12}>
          <circle cx="3" cy="3" r="3" fill="#777" />
          <path d="M6 1.500h7v9H3.500V7M5 6.500h6M5 8.500h6" stroke="#777" />
          <path d="M6 1h7v3H7z" fill="#777" />
        </Svg>
      </span>
      <span className="ml-auto flex h-full w-[27px] items-center">
        <Svg w={13} h={12}><path d="M6.500 1.500v10M.5.5h5l1 1 1-1h5v10H.5zM2 3.500h3M2 5.500h3M2 7.500h3M8 3.500h3M8 5.500h3M8 7.500h3" stroke="#666" /></Svg>
      </span>
      <span className="flex h-full w-[38px] items-center justify-center bg-[#c9c9c9]">
        <Svg w={14} h={12}><path d="M.5.5h13v11H.5zM2 2.500h10M2 4.500h10M2 6.500h10M2 8.500h10" stroke="#555" /></Svg>
      </span>
      <span className="flex w-[42px] justify-center">
        <Svg w={14} h={12}>
          <path d="M5 10.500H.5v-10h11v4M2 2.500h8M2 4.500h6M2 6.500h4" stroke="#666" />
          <circle cx="10" cy="8" r="3.500" fill="#777" />
        </Svg>
      </span>
      <button type="button" aria-label="缩小" className="h-0.5 w-1.5 bg-[#555]" />
      <span className="ml-1 flex h-3 w-[100px] items-center justify-center bg-[linear-gradient(#aaa,#aaa)] bg-[length:100%_1px] bg-center bg-no-repeat">
        <span className="h-3 w-1 bg-[#555]" />
      </span>
      <button type="button" aria-label="放大" className="ml-1">
        <Svg w={8} h={8}><path d="M0 4h8M4 0v8" stroke="#555" strokeWidth="2" /></Svg>
      </button>
      <span className="mr-[18px] ml-4">110%</span>
    </div>
  </footer>
);

const Watermark = () => (
  <div className="pointer-events-none absolute right-[11px] bottom-2 flex items-end opacity-90">
    <svg width="44" height="42" viewBox="0 0 44 42" aria-hidden="true">
      <defs>
        <linearGradient id="swooshBlue" x1="0" y1="1" x2="1" y2="0">
          <stop offset="0" stopColor="#3f78c8" />
          <stop offset="1" stopColor="#5cc4ee" />
        </linearGradient>
        <linearGradient id="swooshGreen" x1="0" y1="1" x2="1" y2="0">
          <stop offset="0" stopColor="#e3dd4a" />
          <stop offset="1" stopColor="#4dbb6a" />
        </linearGradient>
      </defs>
      <path d="M44 2C26-1 4 8 1 21c-1 7 4 11 10 12C6 25 14 12 44 2z" fill="url(#swooshBlue)" />
      <path d="M34 19c-7-5-20-1-20 7 0 6 9 7 14 2-5 1-9 0-8-3 1-4 8-6 14-6z" fill="#5b93d0" />
      <path d="M31 15c5 6 2 14-9 19-6 3-12 4-18 5 16 5 37-4 38-15 0-6-5-9-11-9z" fill="url(#swooshGreen)" />
    </svg>
    <div className="flex flex-col">
      <span className="text-[21px] leading-6 font-bold text-[#5b97d0]">极光下载站</span>
      <span className="text-[15px] leading-[18px] text-[#4cb45e] [font-family:'DejaVu_Sans',sans-serif]">www.xz7.com</span>
    </div>
  </div>
);

export default function App() {
  return (
    <div
      lang="zh-CN"
      className="relative flex h-screen flex-col overflow-hidden bg-[#e6e6e6] [font-family:'Open_Sans','Noto_Sans_CJK_SC',sans-serif]"
    >
      <TitleBar />
      <Ribbon />
      <QuickAccess />
      <main className="flex min-h-0 flex-1 pt-px">
        <VRuler />
        <div className="flex min-w-0 flex-1 flex-col gap-[9px] pt-[5px] pr-[14px]">
          <HRuler />
          <Page />
        </div>
      </main>
      <StatusBar />
      <Watermark />
    </div>
  );
}
